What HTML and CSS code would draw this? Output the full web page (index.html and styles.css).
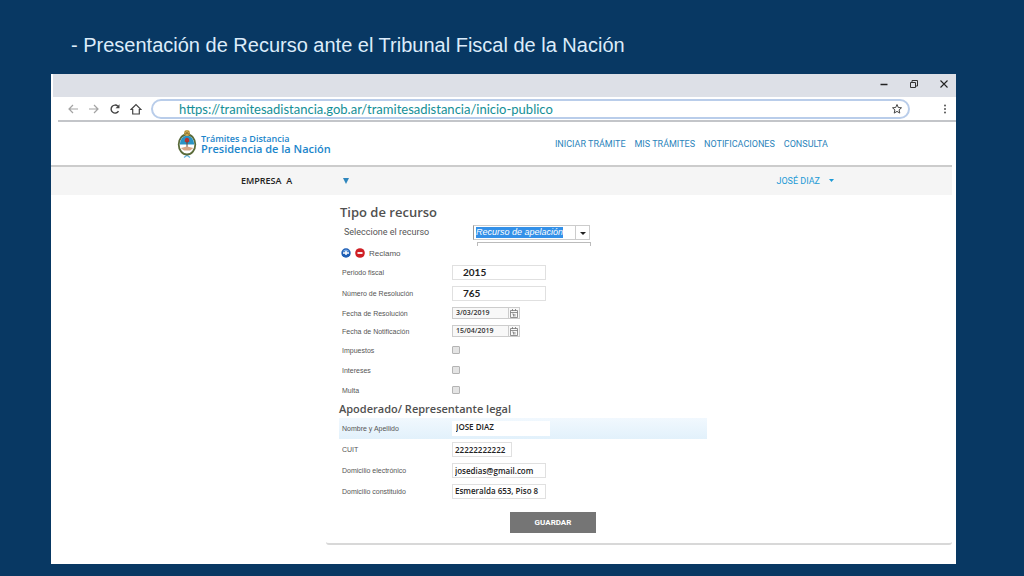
FILE: index.html
```html
<!DOCTYPE html>
<html lang="es">
<head>
    <meta charset="UTF-8">
    <meta name="viewport" content="width=device-width, initial-scale=1.0">
    <title>Trámites a Distancia</title>
    <link rel="stylesheet" href="styles.css">
</head>
<body>
    <h1 class="slide-title">- Presentación de Recurso ante el Tribunal Fiscal de la Nación</h1>

    <div class="window">
        <!-- Browser frame -->
        <div class="title-bar">
            <button type="button" class="icon-button" aria-label="Minimizar">
                <svg width="10" height="10" viewBox="0 0 10 10"><path d="M1.500 5.500h7" stroke="#222" stroke-width="1.500"/></svg>
            </button>
            <button type="button" class="icon-button" aria-label="Restaurar">
                <svg width="10" height="10" viewBox="0 0 10 10" fill="none" stroke="#333"><path d="M1.500 3.500h5v5h-5z"/><path d="M3 3.500v-2h5.500v5.500h-2"/></svg>
            </button>
            <button type="button" class="icon-button" aria-label="Cerrar">
                <svg width="10" height="10" viewBox="0 0 10 10"><path d="M1.500 1.500l7 7M8.500 1.500l-7 7" stroke="#222" stroke-width="1.100"/></svg>
            </button>
        </div>

        <div class="toolbar">
            <button type="button" class="icon-button" aria-label="Atrás">
                <svg width="12" height="12" viewBox="0 0 12 12" fill="none" stroke="#a3a3a3" stroke-width="1.200"><path d="M11 6H2M6 2L2 6l4 4"/></svg>
            </button>
            <button type="button" class="icon-button" aria-label="Adelante">
                <svg width="12" height="12" viewBox="0 0 12 12" fill="none" stroke="#a3a3a3" stroke-width="1.200"><path d="M1 6h9M6 2l4 4-4 4"/></svg>
            </button>
            <button type="button" class="icon-button" aria-label="Recargar">
                <svg width="12" height="12" viewBox="0 0 12 12"><path d="M9.500 8.200A4 4 0 1 1 8.900 3.200" fill="none" stroke="#444" stroke-width="1.400"/><path d="M10.500 1.200v4H6.500z" fill="#444"/></svg>
            </button>
            <button type="button" class="icon-button" aria-label="Inicio">
                <svg width="12" height="12" viewBox="0 0 12 12" fill="none" stroke="#444" stroke-width="1.200"><path d="M1 6.500L6 1.500l5 5H9.300V11H2.700V6.500z"/></svg>
            </button>
            <div class="address">
                <input type="text" class="address-input" aria-label="Dirección" value="https://tramitesadistancia.gob.ar/tramitesadistancia/inicio-publico">
                <button type="button" class="icon-button" aria-label="Agregar a favoritos">
                    <svg width="12" height="12" viewBox="0 0 12 12"><path d="M6 1.500l1.300 3 3.200.3-2.400 2.100.7 3.200L6 8.400l-2.800 1.700.7-3.200L1.500 4.800l3.200-.3z" fill="none" stroke="#444"/></svg>
                </button>
            </div>
            <button type="button" class="icon-button" aria-label="Menú">
                <svg width="12" height="12" viewBox="0 0 12 12" fill="#555"><circle cx="6" cy="2.500" r="1"/><circle cx="6" cy="6" r="1"/><circle cx="6" cy="9.500" r="1"/></svg>
            </button>
        </div>

        <!-- Site header -->
        <header class="site-header">
            <a class="brand" href="#">
                <svg width="20" height="30" viewBox="0 0 20 30">
                    <path d="M7 24l6 4.500M13 24l-6 4.500" stroke="#62b3de" stroke-width="1.300"/>
                    <ellipse cx="10" cy="15.500" rx="8.300" ry="10" fill="#fff" stroke="#5b6b3a" stroke-width="1.800"/>
                    <path d="M2.800 15.500a7.200 8.900 0 0 1 14.400 0z" fill="#2a93c4"/>
                    <circle cx="10" cy="4" r="3" fill="#c9a64f"/>
                    <path d="M7 4.500h6M8 2l4 4M12 2L8 6" stroke="#8d7433" stroke-width=".6"/>
                    <path d="M8 10q2-2.500 4 0l.3 2.500q-2.300 2-4.600 0z" fill="#b8322e"/>
                    <path d="M10 12.500v8" stroke="#6b3f2a" stroke-width="1"/>
                    <path d="M3.800 19l5-1.200h2.500l5 1.200-3.200 2.600H7z" fill="#d6a585"/>
                </svg>
                <span class="brand-text">
                    <span class="brand-top">Trámites a Distancia</span>
                    <span class="brand-bottom">Presidencia de la Nación</span>
                </span>
            </a>
            <nav class="main-nav">
                <a href="#">INICIAR TRÁMITE</a>
                <a href="#">MIS TRÁMITES</a>
                <a href="#">NOTIFICACIONES</a>
                <a href="#">CONSULTA</a>
            </nav>
        </header>

        <div class="user-bar">
            <button type="button" class="company">
                <span>EMPRESA&nbsp; A</span>
                <svg width="6" height="6" viewBox="0 0 6 6"><path d="M0 0h6L3 6z" fill="#2f86bd"/></svg>
            </button>
            <button type="button" class="user">
                <span>JOSÉ DIAZ</span>
                <svg width="5" height="3" viewBox="0 0 5 3"><path d="M0 0h5L2.500 3z" fill="#1c9ad6"/></svg>
            </button>
        </div>

        <form class="card">
            <h2 class="section-title">Tipo de recurso</h2>
            <div class="row type-row">
                <label for="recurso">Seleccione el recurso</label>
                <div class="combo">
                    <select id="recurso">
                        <option>Recurso de apelación</option>
                    </select>
                    <span class="combo-arrow"></span>
                    <div class="combo-popup"></div>
                </div>
            </div>

            <div class="claim">
                <button type="button" class="icon-button" aria-label="Agregar reclamo">
                    <svg width="10" height="10" viewBox="0 0 10 10"><circle cx="5" cy="5" r="4.700" fill="#1f5fb5"/><path d="M1.500 3.500q3.500-4 7 0z" fill="#7fb0e8"/><path d="M2 5h6M5 3v4" stroke="#fff" stroke-width="1.500"/></svg>
                </button>
                <button type="button" class="icon-button" aria-label="Quitar reclamo">
                    <svg width="10" height="10" viewBox="0 0 10 10"><circle cx="5" cy="5" r="4.800" fill="#cf1f24"/><path d="M2.500 5h5" stroke="#fff" stroke-width="1.800"/></svg>
                </button>
                <span>Reclamo</span>
            </div>

            <div class="row">
                <label for="periodo">Periodo fiscal</label>
                <input type="text" id="periodo" class="field number" value="2015">
            </div>
            <div class="row">
                <label for="resolucion">Número de Resolución</label>
                <input type="text" id="resolucion" class="field number" value="765">
            </div>
            <div class="row date-row">
                <label for="fecha-resolucion">Fecha de Resolución</label>
                <div class="date">
                    <input type="text" id="fecha-resolucion" value="3/03/2019">
                    <button type="button" class="date-button" aria-label="Abrir calendario">
                        <svg width="8" height="9" viewBox="0 0 8 9" fill="none" stroke="#777" stroke-width=".8"><path d="M.5 1.500h7v7h-7zM.5 3.500h7M2.500 0v2M5.500 0v2M2.300 5h1.200v2.500M4.900 5v2.500"/></svg>
                    </button>
                </div>
            </div>
            <div class="row date-row">
                <label for="fecha-notificacion">Fecha de Notificación</label>
                <div class="date">
                    <input type="text" id="fecha-notificacion" value="15/04/2019">
                    <button type="button" class="date-button" aria-label="Abrir calendario">
                        <svg width="8" height="9" viewBox="0 0 8 9" fill="none" stroke="#777" stroke-width=".8"><path d="M.5 1.500h7v7h-7zM.5 3.500h7M2.500 0v2M5.500 0v2M2.300 5h1.200v2.500M4.900 5v2.500"/></svg>
                    </button>
                </div>
            </div>
            <div class="row check-row">
                <label for="impuestos">Impuestos</label>
                <input type="checkbox" id="impuestos">
            </div>
            <div class="row check-row">
                <label for="intereses">Intereses</label>
                <input type="checkbox" id="intereses">
            </div>
            <div class="row check-row">
                <label for="multa">Multa</label>
                <input type="checkbox" id="multa">
            </div>

            <h3 class="subsection-title">Apoderado/ Representante legal</h3>
            <div class="row active">
                <label for="nombre">Nombre y Apellido</label>
                <input type="text" id="nombre" class="field name" value="JOSE DIAZ">
            </div>
            <div class="row">
                <label for="cuit">CUIT</label>
                <input type="text" id="cuit" class="field short" value="22222222222">
            </div>
            <div class="row">
                <label for="electronico">Domicilio electrónico</label>
                <input type="text" id="electronico" class="field" value="josedias@gmail.com">
            </div>
            <div class="row">
                <label for="constituido">Domicilio constituido</label>
                <input type="text" id="constituido" class="field raised" value="Esmeralda 653, Piso 8">
            </div>

            <button type="submit" class="save">GUARDAR</button>
        </form>
    </div>
</body>
</html>
```
FILE: styles.css
```css
* {
    margin: 0;
    padding: 0;
    box-sizing: border-box;
}

body {
    padding: 32px 68px 12px 51px;
    background: #083863;
    font-family: "Liberation Sans", Arial, sans-serif;
    color: #555;
}

button,
input,
select {
    border: none;
    border-radius: 0;
    background: none;
    font: inherit;
    color: inherit;
}

button {
    cursor: pointer;
}

a {
    text-decoration: none;
}

.slide-title {
    padding: 0 20px;
    margin-bottom: 16px;
    font-size: 20px;
    font-weight: 400;
    line-height: 26px;
    color: #dcecfa;
}

.window {
    background: #fff;
    padding-bottom: 19px;
}

.icon-button {
    display: flex;
}

/* Browser frame */
.title-bar {
    display: flex;
    justify-content: flex-end;
    align-items: center;
    gap: 20px;
    height: 23px;
    margin-left: 2px;
    padding: 0 7px 4px 0;
    background: #dde0e7;
}

.toolbar {
    display: flex;
    align-items: center;
    gap: 9px;
    height: 25px;
    margin-left: 7px;
    padding: 0 5px 0 9px;
    border-bottom: 2px solid #c3c5c9;
}

.address {
    flex: 1;
    display: flex;
    align-items: center;
    height: 20px;
    margin-right: 20px;
    padding: 0 5px 0 26px;
    border: 2px solid #b9cdea;
    border-radius: 10px;
}

.address-input {
    flex: 1;
    font-family: Lato, sans-serif;
    font-size: 13px;
    color: #148f97;
}

/* Site header */
.site-header {
    display: flex;
    justify-content: space-between;
    align-items: center;
    height: 45px;
    margin-right: 4px;
    padding: 1px 124px 0 126px;
    border-bottom: 2px solid #ccc;
}

.brand {
    display: flex;
    align-items: center;
    gap: 4px;
    color: #1c86cb;
    font-family: "Open Sans", sans-serif;
    font-weight: 600;
}

.brand-text {
    display: grid;
}

.brand-top,
.brand-bottom {
    font-size: 9px;
    line-height: 10px;
}

.brand-bottom {
    font-size: 11px;
}

.main-nav {
    display: flex;
    gap: 9px;
    font-family: Roboto, sans-serif;
    font-size: 9px;
}

.main-nav a {
    color: #2b84bb;
}

.user-bar {
    display: flex;
    justify-content: space-between;
    align-items: center;
    height: 28px;
    margin-right: 4px;
    padding: 0 118px 1px 190px;
    background: #f5f5f5;
}

.company,
.user {
    display: flex;
    align-items: center;
    font-size: 9px;
}

.company {
    gap: 51px;
    font-family: "Open Sans", sans-serif;
    font-weight: 600;
    color: #222;
}

.user {
    gap: 9px;
    font-family: Roboto, sans-serif;
    color: #1c9ad6;
}

/* Form */
.card {
    margin: 0 4px 0 275px;
    padding: 8px 12px 10px 13px;
    border-bottom: 2px solid #d8d8d8;
    border-radius: 3px;
}

.section-title,
.subsection-title {
    font-family: "Open Sans", sans-serif;
    font-weight: 600;
    color: #505050;
}

.section-title {
    padding-left: 1px;
    font-size: 13px;
    line-height: 19px;
}

.subsection-title {
    font-size: 11px;
    line-height: 18px;
}

.row {
    display: grid;
    grid-template-columns: 110px 1fr;
    align-items: center;
    height: 21px;
    max-width: 368px;
    padding-left: 3px;
    font-size: 7px;
}

.date-row {
    height: 18px;
}

.check-row {
    height: 20px;
}

.type-row {
    grid-template-columns: 129px 1fr;
    height: 20px;
    padding-left: 5px;
    font-family: Roboto, sans-serif;
    font-size: 9px;
}

.active {
    background: linear-gradient(#f1f8fe, #e2f1fb);
}

.combo {
    position: relative;
    display: flex;
    justify-self: start;
    height: 15px;
    border: 1px solid #ccc;
    border-left-color: #999;
}

.combo select {
    appearance: none;
    width: 101px;
    padding: 1px 12px 1px 2px;
    background: #3390e8 content-box;
    font-family: "Liberation Sans", Arial, sans-serif;
    font-style: italic;
    color: #fff;
}

.combo-arrow {
    width: 14px;
    border-left: 1px solid #ccc;
    pointer-events: none;
}

.combo-arrow::before {
    content: "";
    display: block;
    margin: 6px 4px;
    border: 3px solid transparent;
    border-top-color: #222;
}

/* Top edge of the opening list */
.combo-popup {
    position: absolute;
    top: 16px;
    left: 3px;
    right: -2px;
    height: 4px;
    border: 1px solid #bbb;
    border-bottom: none;
}

.claim {
    display: flex;
    align-items: center;
    gap: 4px;
    height: 20px;
    padding: 2px 0 0 2px;
    font-size: 8px;
}

.field {
    width: 94px;
    height: 15px;
    padding: 0 2px;
    border: 1px solid #e0e0e0;
    background: #fff;
    font-family: "Open Sans", sans-serif;
    font-size: 8px;
    font-weight: 600;
    color: #222;
}

.number {
    padding: 0 10px 2px;
    font-family: Lato, sans-serif;
    font-size: 10px;
    font-weight: 700;
}

.name {
    width: 98px;
    border-color: #fff;
    padding: 0 3px 4px;
}

.raised {
    padding-bottom: 3px;
}

.short {
    width: 60px;
}

.date {
    display: flex;
    justify-self: start;
    height: 12px;
    border: 1px solid #ccc;
    background: #f8f8f8;
}

.date input {
    width: 55px;
    padding: 0 3px 1px;
    font-family: "Open Sans", sans-serif;
    font-size: 7px;
    font-weight: 600;
    color: #333;
}

.date-button {
    display: flex;
    align-items: center;
    justify-content: center;
    width: 11px;
    border-left: 1px solid #ccc;
}

.row input[type="checkbox"] {
    appearance: none;
    width: 8px;
    height: 8px;
    border: 1px solid #b4b4b4;
    border-radius: 1px;
    background: #e4e4e4;
}

.save {
    display: block;
    width: 86px;
    height: 21px;
    margin: 10px 0 0 171px;
    background: #757575;
    font-family: Roboto, sans-serif;
    font-size: 8px;
    font-weight: 700;
    color: #fff;
}
```
